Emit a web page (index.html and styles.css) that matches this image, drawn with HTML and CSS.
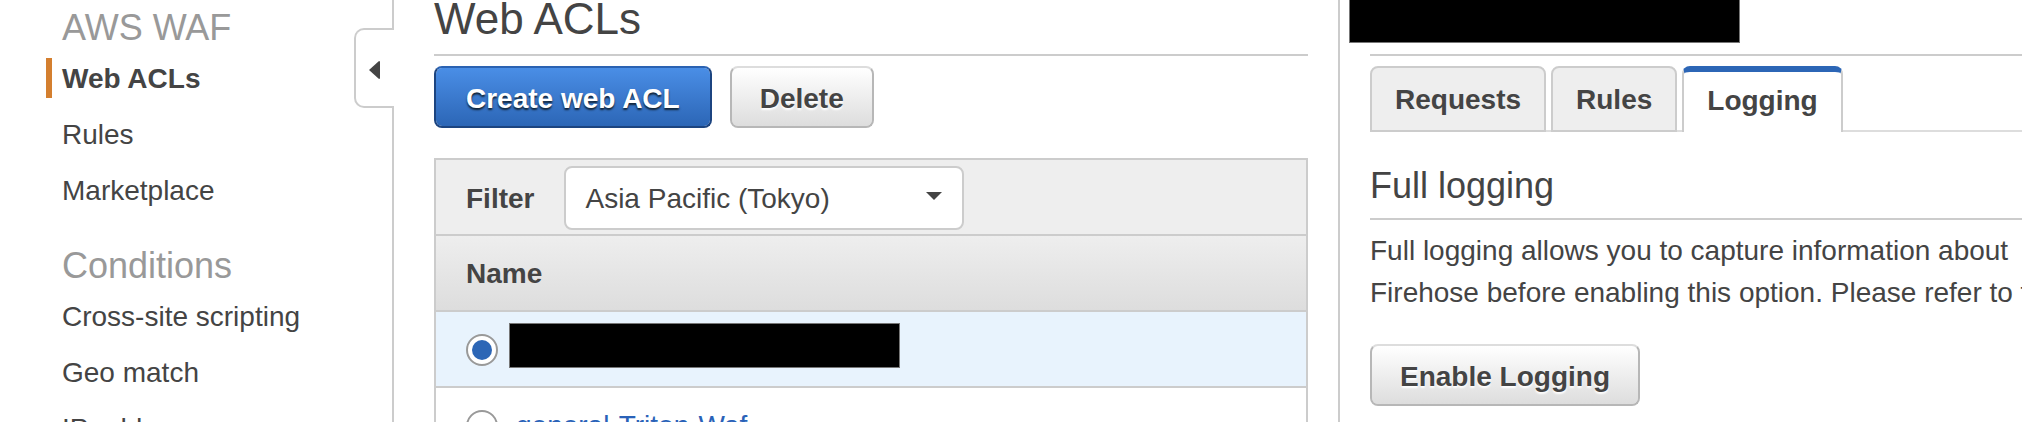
FILE: index.html
```html
<!DOCTYPE html>
<html lang="en">
<head>
<meta charset="utf-8">
<title>AWS WAF - Web ACLs</title>
<link rel="stylesheet" href="styles.css">
</head>
<body>
<div class="console">
  <nav class="sidebar">
    <button class="collapse" type="button" aria-label="Collapse navigation">
      <svg width="12" height="18" viewBox="0 0 12 18" aria-hidden="true"><path d="M0 9 10 0Q11 0 11 1V17Q11 18 10 18Z" fill="#444"/></svg>
    </button>
    <h2 class="nav-title">AWS WAF</h2>
    <ul class="nav-list">
      <li><a class="nav-link current" href="#acls">Web ACLs</a></li>
      <li><a class="nav-link" href="#rules">Rules</a></li>
      <li><a class="nav-link" href="#marketplace">Marketplace</a></li>
    </ul>
    <h2 class="nav-title">Conditions</h2>
    <ul class="nav-list">
      <li><a class="nav-link" href="#xss">Cross-site scripting</a></li>
      <li><a class="nav-link" href="#geo">Geo match</a></li>
      <li><a class="nav-link" href="#ip">IP addresses</a></li>
    </ul>
  </nav>

  <main class="list-pane">
    <h1 class="page-title">Web ACLs</h1>
    <div class="actions">
      <button class="btn btn-primary" type="button">Create web ACL</button>
      <button class="btn" type="button">Delete</button>
    </div>
    <div class="panel">
      <div class="filter">
        <label class="filter-label" for="region">Filter</label>
        <div class="select-wrap">
          <select class="select" id="region"><option>Asia Pacific (Tokyo)</option></select>
          <svg class="caret" width="16" height="8" viewBox="0 0 16 8" aria-hidden="true"><path d="M0 0H16L8 8Z" fill="#444"/></svg>
        </div>
      </div>
      <table class="acl-table">
        <thead><tr><th>Name</th></tr></thead>
        <tbody>
          <tr class="selected"><td><div class="row"><input class="radio" type="radio" name="acl" aria-label="Selected web ACL" checked><span class="mask mask-row"></span></div></td></tr>
          <tr><td><div class="row"><input class="radio" type="radio" name="acl" id="acl-general"><label class="acl-name" for="acl-general">general-Triton-Waf</label></div></td></tr>
        </tbody>
      </table>
    </div>
  </main>

  <section class="detail-pane">
    <div class="detail-head"><span class="mask mask-title"></span></div>
    <div class="tabs" role="tablist">
      <button class="tab" type="button" role="tab">Requests</button>
      <button class="tab" type="button" role="tab">Rules</button>
      <button class="tab tab-active" type="button" role="tab" aria-selected="true">Logging</button>
    </div>
    <h2 class="section-title">Full logging</h2>
    <p class="copy">Full logging allows you to capture information about<br>Firehose before enabling this option. Please refer to the</p>
    <button class="btn" type="button">Enable Logging</button>
  </section>
</div>
</body>
</html>
```

FILE: styles.css
```css
* {
  box-sizing: border-box;
}

body {
  margin: 0;
  background: #fff;
  color: #444;
  font: 28px/42px "Liberation Sans", Arial, sans-serif;
}

h1, h2, p, ul {
  margin: 0;
  padding: 0;
  font-weight: normal;
}

button, select {
  color: inherit;
  font: inherit;
}

.console {
  display: grid;
  grid-template-columns: 394px minmax(0, 946fr) minmax(0, 682fr);
  height: 100vh;
  overflow: hidden;
}

/* Navigation */
.sidebar {
  position: relative;
  padding: 6px 0 0 46px;
  border-right: 2px solid #ccc;
}

.collapse {
  position: absolute;
  top: 28px;
  right: -2px;
  display: flex;
  align-items: center;
  width: 40px;
  height: 80px;
  padding: 4px 0 0 13px;
  border: 2px solid #ccc;
  border-right: 0;
  border-radius: 10px 0 0 10px;
  background: #fff;
}

.nav-title {
  margin-bottom: 8px;
  padding-left: 16px;
  color: #999;
  font-size: 36px;
  line-height: 44px;
}

.nav-list {
  display: grid;
  gap: 16px;
  margin-bottom: 34px;
  list-style: none;
}

.nav-link {
  display: block;
  padding: 2px 0 0 10px;
  border-left: 6px solid transparent;
  color: inherit;
  line-height: 38px;
  text-decoration: none;
}

.current {
  border-left-color: #d47f2f;
  font-weight: bold;
}

/* List of ACLs */
.list-pane {
  padding: 0 30px 0 40px;
  border-right: 2px solid #ccc;
}

.page-title {
  padding-bottom: 16px;
  border-bottom: 2px solid #ccc;
  font-size: 44px;
  line-height: 38px;
}

.actions {
  display: flex;
  gap: 18px;
  margin: 10px 0 30px;
}

.btn {
  padding: 10px 28px 6px;
  border: 2px solid #b7b7b7;
  border-top-color: #ddd;
  border-radius: 8px;
  background: linear-gradient(#fff, #ddd) padding-box;
  font-weight: bold;
  text-shadow: 0 2px 2px #fff;
}

.btn-primary {
  padding: 10px 30px 6px;
  border-color: #1c4480;
  border-top-color: #2a62b2;
  background: linear-gradient(#4a8ee6, #2c66b6) padding-box;
  color: #fff;
  text-shadow: 0 2px 2px #123;
}

.panel {
  border: 2px solid #ccc;
}

.filter {
  display: flex;
  align-items: center;
  gap: 30px;
  padding: 6px 30px 4px;
  border-bottom: 2px solid #ccc;
  background: #eee;
}

.filter-label {
  padding-top: 2px;
  font-weight: bold;
}

.select-wrap {
  position: relative;
  width: 400px;
}

.select {
  display: block;
  width: 100%;
  height: 64px;
  padding: 2px 60px 0 19px;
  border: 2px solid #ccc;
  border-radius: 8px;
  appearance: none;
  background: #fff;
}

.caret {
  position: absolute;
  top: 26px;
  right: 22px;
  pointer-events: none;
}

.acl-table {
  width: 100%;
  border-spacing: 0;
}

.acl-table th {
  padding: 17px 30px 15px;
  border-bottom: 2px solid #ccc;
  background: linear-gradient(#eee, #ddd);
  text-align: left;
}

.acl-table td {
  padding: 0 30px;
  border-bottom: 2px solid #ccc;
}

.selected {
  background: #e8f3fd;
}

.row {
  display: flex;
  align-items: center;
  gap: 18px;
  height: 74px;
  padding-top: 2px;
}

.radio {
  display: grid;
  place-items: center;
  width: 32px;
  height: 32px;
  margin: 0;
  border: 2px solid #999;
  border-radius: 50%;
  appearance: none;
  background: #fff;
}

.radio:checked::after {
  width: 20px;
  height: 20px;
  border-radius: 50%;
  background: #2c66b6;
  content: "";
}

.acl-name {
  color: #2a62b8;
}

.mask {
  display: block;
  border: 1px solid #777;
  background: #000;
}

.mask-row {
  align-self: flex-start;
  width: 391px;
  height: 45px;
  margin: 9px 0 0 -7px;
}

/* Details */
.detail-pane {
  padding-left: 30px;
  overflow: hidden;
}

.detail-head {
  padding-bottom: 11px;
  border-bottom: 2px solid #ccc;
}

.mask-title {
  width: 391px;
  height: 43px;
  margin-left: -21px;
  border-top: 0;
}

.tabs {
  display: flex;
  gap: 5px;
  height: 66px;
  margin: 10px 0 32px;
  box-shadow: inset 0 -2px #ddd;
}

.tab {
  padding: 2px 23px 0;
  border: 2px solid #ccc;
  border-radius: 8px 8px 0 0;
  background: #eee;
  font-weight: bold;
}

.tab-active {
  padding-bottom: 4px;
  border-top: 6px solid #2c66b6;
  border-bottom: 0;
  background: #fff;
}

.section-title {
  margin-bottom: 10px;
  padding-bottom: 10px;
  border-bottom: 2px solid #ccc;
  font-size: 36px;
  line-height: 44px;
}

.copy {
  margin-bottom: 30px;
  white-space: nowrap;
}
```
